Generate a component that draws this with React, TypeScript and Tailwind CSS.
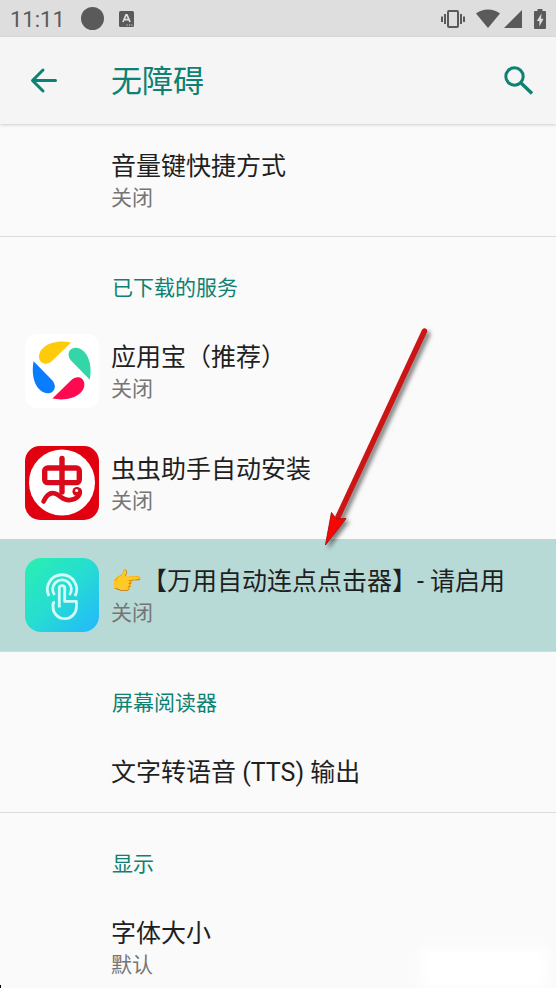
import type { ReactNode } from "react";

type Item = {
  title: string;
  emoji?: string;
  summary?: string;
  icon?: ReactNode;
  selected?: boolean;
};

type Section = {
  heading?: string;
  items: Item[];
};

function PinwheelIcon() {
  const petal = "M46 8.4L27.5 26.5C23.5 30.3 18.8 30.6 16 27.8C12.8 24.6 13.4 18.4 18 14C24.5 8 35 6.4 46 8.4Z";
  return (
    <svg viewBox="0 0 74 74" className="size-full" aria-hidden="true">
      <rect width="74" height="74" rx="12" fill="#fff" />
      <path d={petal} fill="#fecb0a" />
      <path d={petal} fill="#33d6a6" transform="rotate(90 36.7 36.5)" />
      <path d={petal} fill="#ff0a50" transform="rotate(180 36.7 36.5)" />
      <path d={petal} fill="#0a7dff" transform="rotate(270 36.7 36.5)" />
    </svg>
  );
}

function BugIcon() {
  return (
    <svg viewBox="0 0 74 74" className="size-full" fill="none" aria-hidden="true">
      <rect width="74" height="74" rx="15" fill="#e1000f" />
      <circle cx="37" cy="36.5" r="33" fill="#fff" />
      <g stroke="#d90a1c" strokeWidth="5.4" strokeLinecap="round">
        <rect x="19.7" y="22" width="34.6" height="14.6" rx="3" />
        <path d="M37 12.5V46" />
        <path d="M18.5 55.5C21 50 25 46 30 47.5C36 49.5 38 55 45 54C52 53 56 49 54.5 44.5" strokeWidth="4.6" />
      </g>
      <circle cx="52" cy="45.5" r="4.6" fill="#d90a1c" />
      <circle cx="51.6" cy="44.5" r="1.5" fill="#fff" />
    </svg>
  );
}

function TapIcon() {
  return (
    <svg viewBox="0 0 74 74" className="size-full" fill="none" aria-hidden="true">
      <defs>
        <linearGradient id="tap-fill" x1="0" y1="0" x2="1" y2="1">
          <stop offset="0" stopColor="#2af0b0" />
          <stop offset="0.5" stopColor="#26dcd2" />
          <stop offset="1" stopColor="#22b8ff" />
        </linearGradient>
      </defs>
      <rect width="74" height="74" rx="16" fill="url(#tap-fill)" />
      <g stroke="#d2fbfa" strokeWidth="2.8" strokeLinejoin="round">
        <path d="M24 38A14.6 14.6 0 1 1 50 38" />
        <path d="M29.5 37A9.4 9.4 0 1 1 44.5 37" />
        <path d="M34.3 49.5V30.3A2.7 2.7 0 0 1 39.7 30.3V43.4H51.4V49A11.7 11.7 0 0 1 28 49V46.5Q28 44.5 30 44.5" />
      </g>
    </svg>
  );
}

const sections: Section[] = [
  {
    items: [{ title: "音量键快捷方式", summary: "关闭" }],
  },
  {
    heading: "已下载的服务",
    items: [
      { title: "应用宝（推荐）", summary: "关闭", icon: <PinwheelIcon /> },
      { title: "虫虫助手自动安装", summary: "关闭", icon: <BugIcon /> },
      {
        title: "【万用自动连点点击器】- 请启用",
        emoji: "👉",
        summary: "关闭",
        icon: <TapIcon />,
        selected: true,
      },
    ],
  },
  {
    heading: "屏幕阅读器",
    items: [{ title: "文字转语音 (TTS) 输出" }],
  },
  {
    heading: "显示",
    items: [{ title: "字体大小", summary: "默认" }],
  },
];

function StatusBar() {
  return (
    <div className="flex h-[37px] shrink-0 items-center bg-[#dedede] px-[10px] text-[#5a5a5a]">
      <span className="pt-0.5 text-[22px] leading-6">11:11</span>
      <span className="ml-4 size-[23px] rounded-full bg-[#5a5a5a]" />
      <svg viewBox="0 0 15 16" className="ml-[15px] h-4 w-[15px]" aria-hidden="true">
        <rect width="15" height="16" rx="1.5" fill="currentColor" />
        <path d="M4 11L7 3.8H8L11 11M5.2 8.7H9.8" fill="none" stroke="#dedede" strokeWidth="1.7" />
        <path d="M7.5 14H8.7M10 14H11.2M12.3 14H13.5" stroke="#dedede" strokeWidth="1" />
      </svg>
      <div className="ml-auto flex items-center">
        <svg viewBox="0 0 26 20" className="h-5 w-[26px]" fill="none" stroke="currentColor" strokeWidth="2" aria-hidden="true">
          <rect x="8" y="2" width="10" height="16" rx="1" />
          <path d="M5 5V15M21 5V15M2 7.5V13M24 7.5V13" />
        </svg>
        <svg viewBox="0 0 24 20" className="ml-[10px] h-5 w-6" fill="currentColor" aria-hidden="true">
          <path d="M12 19L0 4.6C7 -.8 17 -.8 24 4.6Z" />
        </svg>
        <svg viewBox="0 0 18 20" className="ml-1 h-5 w-[18px]" fill="currentColor" aria-hidden="true">
          <path d="M18 1V19H0Z" />
        </svg>
        <svg viewBox="0 0 12 20" className="ml-3 h-5 w-3" fill="currentColor" aria-hidden="true">
          <path d="M3.5 0H8.5V2H11Q12 2 12 3V19Q12 20 11 20H1Q0 20 0 19V3Q0 2 1 2H3.5Z" />
          <path d="M7.5 4.5L2.8 12H5.4V17.5L9.6 9.8H7Z" fill="#dedede" />
        </svg>
      </div>
    </div>
  );
}

function AppBar() {
  return (
    <header className="z-10 flex h-[87px] shrink-0 items-center bg-[#f5f5f5] pr-[22px] pl-[29px] text-[#0d8172] shadow-[0_1px_3px_rgba(0,0,0,0.18)]">
      <button type="button" aria-label="返回" className="size-[30px]">
        <svg viewBox="0 0 30 30" fill="none" stroke="currentColor" strokeWidth="3" strokeLinecap="round" strokeLinejoin="round" aria-hidden="true">
          <path d="M26.5 14.5H4M14 4L3.5 14.5L14 25" />
        </svg>
      </button>
      <h1 className="ml-[52px] pt-0.5 text-[31px] leading-10">无障碍</h1>
      <button type="button" aria-label="搜索" className="ml-auto size-[30px]">
        <svg viewBox="0 0 30 30" fill="none" stroke="currentColor" strokeWidth="3" aria-hidden="true">
          <circle cx="10.5" cy="10.5" r="8.7" />
          <path d="M17 17L28 27.5" strokeWidth="3.4" />
        </svg>
      </button>
    </header>
  );
}

function SettingRow({ item }: { item: Item }) {
  return (
    <li>
      <button
        type="button"
        className={`flex w-full items-center gap-3 pl-[25px] text-left ${item.summary ? "h-28" : "h-[82px]"} ${
          item.selected ? "bg-[#b8dad7]" : ""
        }`}
      >
        <span className="size-[74px] shrink-0">{item.icon}</span>
        <span className="min-w-0 pt-1">
          <span className="block text-[25px] leading-8 whitespace-nowrap text-[#1f1f1f]">
            {item.emoji}
            {item.title}
          </span>
          {item.summary && <span className="block text-[21px] leading-[30px] text-[#757575]">{item.summary}</span>}
        </span>
      </button>
    </li>
  );
}

export default function App() {
  return (
    <div className="relative flex h-screen flex-col overflow-hidden bg-[#fafafa] font-[Roboto,'Noto_Sans_CJK_SC',sans-serif]">
      <StatusBar />
      <AppBar />
      <main className="min-h-0 flex-1 divide-y divide-[#dadada] overflow-hidden">
        {sections.map((section, i) => (
          <section key={i}>
            {section.heading && (
              <h2 className="pt-9 pb-3 pl-28 text-[21px] leading-[30px] text-[#0d8172]">{section.heading}</h2>
            )}
            <ul>
              {section.items.map((item) => (
                <SettingRow key={item.title} item={item} />
              ))}
            </ul>
          </section>
        ))}
      </main>

      {/* arrow pointing at the service to enable */}
      <svg
        viewBox="0 0 130 235"
        className="pointer-events-none absolute top-[320px] left-[310px] h-[235px] w-[130px] drop-shadow-[3px_3px_2px_rgba(0,0,0,0.5)]"
        aria-hidden="true"
      >
        <path d="M114.5 11L28 197" stroke="#cc1616" strokeWidth="5.5" strokeLinecap="round" />
        <path d="M15.5 225L21.5 192.5L26 199L36 198.5Z" fill="#fb0404" stroke="#b01010" strokeWidth="1" />
      </svg>
      {/* soft patch in the corner */}
      <div className="pointer-events-none absolute right-2 bottom-0 h-10 w-32 bg-white blur-[6px]" />
      <span className="pointer-events-none absolute bottom-0 left-0 h-[3px] w-px bg-black" />
    </div>
  );
}
